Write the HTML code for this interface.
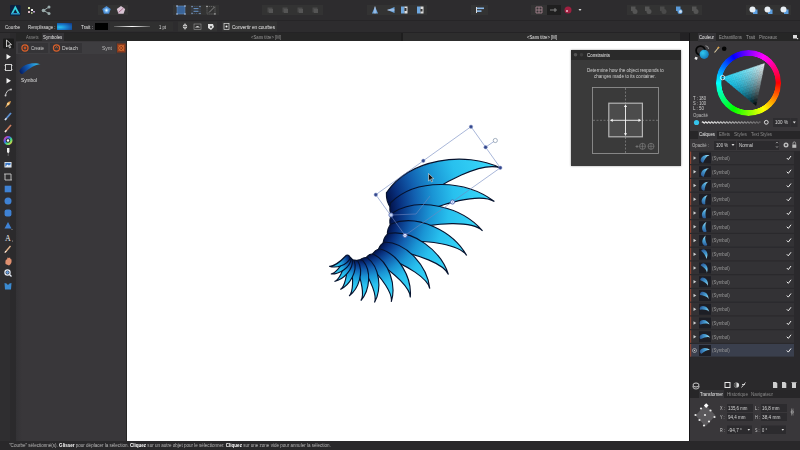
<!DOCTYPE html><html><head><meta charset="utf-8"><style>
*{margin:0;padding:0;box-sizing:border-box}
html,body{width:800px;height:450px;overflow:hidden;background:#2b2b2b;font-family:"Liberation Sans",sans-serif;color:#d8d8d8}
.a{position:absolute}
.t{position:absolute;white-space:nowrap;line-height:1;font-size:5px}
svg{position:absolute;overflow:visible}
</style></head><body>
<div class="a" style="left:0px;top:0px;width:800px;height:20px;background:#2d2c2e;"></div>
<div class="a" style="left:0px;top:19.5px;width:800px;height:1px;background:#262527;"></div>
<div class="a" style="left:0px;top:20.5px;width:800px;height:12.5px;background:#2d2c2e;"></div>
<div class="a" style="left:0px;top:32px;width:800px;height:1px;background:#242325;"></div>
<div class="a" style="left:0px;top:33px;width:800px;height:8px;background:#262527;"></div>
<div class="a" style="left:0px;top:33px;width:10px;height:408px;background:#2f2e30;"></div>
<div class="a" style="left:10px;top:33px;width:6px;height:408px;background:#2b2a2c;"></div>
<div class="a" style="left:16px;top:41px;width:111px;height:400px;background:#39373a;"></div>
<div class="a" style="left:16px;top:41px;width:6px;height:400px;background:linear-gradient(90deg,#333235,#39373a)"></div>
<div class="a" style="left:16px;top:33px;width:111px;height:8px;background:#262527;"></div>
<div class="a" style="left:127px;top:41px;width:562px;height:400px;background:#ffffff;"></div>
<div class="a" style="left:689px;top:41px;width:111px;height:400px;background:#39373a;"></div>
<div class="a" style="left:689px;top:33px;width:111px;height:8px;background:#262626;"></div>
<div class="a" style="left:0px;top:441px;width:800px;height:9px;background:#29282a;"></div>
<svg style="left:0px;top:0px" width="800" height="20" viewBox="0 0 800 20"><rect x="98" y="5" width="30" height="10" fill="#333333"/><rect x="173" y="5" width="46" height="10" fill="#333333"/><rect x="262" y="5" width="61" height="10" fill="#333333"/><rect x="367" y="5" width="60" height="10" fill="#333333"/><rect x="471" y="5" width="17" height="10" fill="#333333"/><rect x="531" y="5" width="16" height="10" fill="#333333"/><rect x="627" y="5" width="75" height="10" fill="#333333"/><rect x="746" y="5" width="45" height="10" fill="#333333"/><rect x="547" y="5" width="14" height="10" fill="#1f1f1f"/><rect x="10" y="5" width="10.5" height="10.8" rx="1.2" fill="#0e1f3e"/><path d="M15.3 5.6 L20 14.3 L10.8 14.3 Z" fill="#36d6e0"/><path d="M15.3 9.2 L17.3 12.9 L13.3 12.9 Z" fill="#0e1f3e"/><path d="M10.8 14.3 L20 14.3 L19.3 13 L11.5 13 Z" fill="#2a90c8"/><rect x="28" y="7" width="2" height="2" fill="#cfd9a0"/><rect x="31" y="9" width="2" height="2" fill="#eee"/><rect x="28" y="11" width="2" height="2" fill="#d9b8c0"/><rect x="33" y="11" width="2" height="1.5" fill="#b9a0d0"/><rect x="31" y="12" width="1.5" height="2" fill="#a0b080"/><circle cx="43.5" cy="10.5" r="1.8" fill="#9aa"/><circle cx="49" cy="7" r="1.5" fill="#9aa"/><circle cx="49" cy="13.5" r="1.5" fill="#9aa"/><path d="M43.5 10.5 L49 7 M43.5 10.5 L49 13.5" stroke="#9aa" stroke-width="1"/><polygon points="106.50,5.90 110.68,8.94 109.09,13.86 103.91,13.86 102.32,8.94" fill="#4a8ad0"/><polygon points="106.50,7.70 108.97,9.50 108.03,12.40 104.97,12.40 104.03,9.50" fill="#7ab8f0"/><circle cx="106.5" cy="10.3" r="1.1" fill="#e8f8ff"/><polygon points="121.00,5.90 125.18,8.94 123.59,13.86 118.41,13.86 116.82,8.94" fill="#d8c4d4"/><path d="M118.5 12.5 L123.5 8" stroke="#a06080" stroke-width="0.9"/><rect x="177" y="6" width="8" height="8" fill="#3a6498" stroke="#6a90c0" stroke-width="0.5"/><rect x="176.3" y="5.3" width="1.4" height="1.4" fill="#a8c0e0"/><rect x="176.3" y="13.3" width="1.4" height="1.4" fill="#a8c0e0"/><rect x="184.3" y="5.3" width="1.4" height="1.4" fill="#a8c0e0"/><rect x="184.3" y="13.3" width="1.4" height="1.4" fill="#a8c0e0"/><rect x="192" y="6.5" width="8" height="7" fill="none" stroke="#4a6a98" stroke-width="0.6" stroke-dasharray="1 0.8"/><rect x="193.5" y="8" width="5" height="1.2" fill="#6088b8"/><rect x="193.5" y="10.7" width="5" height="1.2" fill="#6088b8"/><rect x="191.4" y="5.9" width="1.2" height="1.2" fill="#8aa4c8"/><rect x="191.4" y="12.9" width="1.2" height="1.2" fill="#8aa4c8"/><rect x="199.4" y="5.9" width="1.2" height="1.2" fill="#8aa4c8"/><rect x="199.4" y="12.9" width="1.2" height="1.2" fill="#8aa4c8"/><path d="M207 6.5 h8 v7.5 h-8 z" fill="none" stroke="#808080" stroke-width="0.6" stroke-dasharray="1.2 0.8"/><path d="M209 12.5 L214.5 7" stroke="#a8a8a8" stroke-width="0.7"/><rect x="206.3" y="5.8" width="1.3" height="1.3" fill="#bbb"/><rect x="214.3" y="13.3" width="1.3" height="1.3" fill="#bbb"/><rect x="267.5" y="7.5" width="5" height="5" fill="#4a4a4a"/><rect x="269" y="9" width="4" height="4" fill="#555"/><rect x="282.5" y="7.5" width="5" height="5" fill="#4a4a4a"/><rect x="284" y="9" width="4" height="4" fill="#555"/><rect x="297.5" y="7.5" width="5" height="5" fill="#4a4a4a"/><rect x="299" y="9" width="4" height="4" fill="#555"/><rect x="312.5" y="7.5" width="5" height="5" fill="#4a4a4a"/><rect x="314" y="9" width="4" height="4" fill="#555"/><path d="M372 13.5 L375 6.5 L378 13.5 Z" fill="#6fa8e0"/><path d="M375 6.5 L375 13.5" stroke="#dde" stroke-width="0.7"/><path d="M387.5 10 L394.5 7 L394.5 13 Z" fill="#6fa8e0"/><path d="M387.5 10 L394.5 10" stroke="#dde" stroke-width="0.7"/><rect x="401" y="6.5" width="3.5" height="7" fill="#6fa8e0"/><rect x="404.5" y="6.5" width="3" height="7" fill="#ddd"/><rect x="404.5" y="8" width="2" height="3" fill="#333"/><rect x="417" y="6.5" width="3.5" height="7" fill="#6fa8e0"/><rect x="420.5" y="6.5" width="3" height="7" fill="#ddd"/><rect x="420.5" y="9" width="2" height="2.5" fill="#333"/><rect x="477" y="7.5" width="7" height="1.6" fill="#8ab8e8"/><rect x="477" y="10.3" width="4.5" height="1.6" fill="#8ab8e8"/><rect x="476" y="7" width="1" height="6" fill="#ddd"/><path d="M536 7 h6 v6 h-6 z M539 7 v6 M536 10 h6" fill="none" stroke="#b08a98" stroke-width="0.8"/><path d="M550 10 h7 M555 8 v4" stroke="#aaa" stroke-width="0.7"/><circle cx="568" cy="10" r="3.5" fill="#a02040"/><circle cx="567" cy="11" r="1" fill="#f0c0d0"/><path d="M578.5 9 L581.5 9 L580 11 Z" fill="#ddd"/><rect x="631" y="6.5" width="4.5" height="4.5" fill="#555"/><circle cx="635" cy="11.5" r="2.5" fill="#555"/><rect x="645" y="6.5" width="4.5" height="4.5" fill="#555"/><circle cx="649" cy="11.5" r="2.5" fill="#555"/><rect x="660" y="6.5" width="4.5" height="4.5" fill="#4a4a4a"/><circle cx="664" cy="11.5" r="2.5" fill="#4a4a4a"/><rect x="676" y="6.5" width="4.5" height="4.5" fill="#5a9ad8"/><circle cx="680" cy="11.5" r="2.5" fill="#5a9ad8"/><rect x="692" y="6.5" width="4.5" height="4.5" fill="#555"/><circle cx="696" cy="11.5" r="2.5" fill="#555"/><circle cx="680.5" cy="11.5" r="1.5" fill="#cde"/><rect x="753" y="9.5" width="4.5" height="4.5" fill="#5b9ee0"/><circle cx="752.5" cy="9.5" r="3" fill="#e8eef4"/><rect x="768" y="9.5" width="4.5" height="4.5" fill="#5b9ee0"/><circle cx="767.5" cy="9.5" r="3" fill="#e8eef4"/><rect x="784" y="9.5" width="4.5" height="4.5" fill="#5b9ee0"/><circle cx="783.5" cy="9.5" r="3" fill="#e8eef4"/></svg>
<div class="t" style="left:5px;top:24.65px;font-size:5.6px;height:5.6px;color:#e0e0e0;transform:scaleX(0.817);transform-origin:0 0;">Courbe</div>
<div class="t" style="left:27.5px;top:24.65px;font-size:5.6px;height:5.6px;color:#e0e0e0;transform:scaleX(0.775);transform-origin:0 0;">Remplissage :</div>
<div class="a" style="left:57px;top:22.5px;width:14.5px;height:7.5px;background:radial-gradient(ellipse at 20% 60%,#28c0ee 0%,#1a78c8 45%,#10307a 100%)"></div>
<div class="t" style="left:81px;top:24.65px;font-size:5.6px;height:5.6px;color:#e0e0e0;transform:scaleX(0.851);transform-origin:0 0;">Trait :</div>
<div class="a" style="left:95px;top:23px;width:13px;height:7px;background:#000;"></div>
<div class="a" style="left:110px;top:22px;width:63px;height:9px;background:#303030;"></div>
<div class="a" style="left:114px;top:26px;width:36px;height:1.2px;background:linear-gradient(90deg,rgba(255,255,255,0.2),#fff 50%,rgba(255,255,255,0.2))"></div>
<div class="t" style="left:159px;top:24.65px;font-size:5.4px;height:5.4px;color:#ddd;transform:scaleX(0.777);transform-origin:0 0;">1 pt</div>
<svg style="left:0px;top:20px" width="800" height="13" viewBox="0 20 800 13"><rect x="178" y="21.5" width="13" height="10" fill="#333"/><rect x="191" y="21.5" width="13" height="10" fill="#333"/><rect x="204" y="21.5" width="13" height="10" fill="#333"/><path d="M185 23 L187.5 26.5 L185 30 L182.5 26.5 Z" fill="#eee"/><path d="M181.5 26.5 h7 M185 23 v7" stroke="#2d2d2d" stroke-width="0.6"/><rect x="194" y="24" width="7" height="5.5" fill="none" stroke="#999" stroke-width="0.6"/><path d="M195 27.5 Q197.5 24.5 200 27.5 Z" fill="#ddd"/><path d="M208 24 L213 24 L214 27 L211 30 L208 28 Z" fill="#ddd"/><circle cx="211" cy="27" r="1" fill="#444"/><rect x="222" y="21.5" width="55" height="10" fill="#333"/><rect x="224" y="23.5" width="5" height="6" fill="none" stroke="#ddd" stroke-width="0.7"/><circle cx="226.5" cy="26.5" r="1" fill="#fff"/></svg>
<div class="t" style="left:232px;top:24.65px;font-size:5.6px;height:5.6px;color:#e8e8e8;transform:scaleX(0.827);transform-origin:0 0;">Convertir en courbes</div>
<div class="a" style="left:127px;top:33px;width:274px;height:8px;background:#262626;"></div>
<div class="a" style="left:401px;top:33px;width:2px;height:8px;background:#1e1e1e;"></div>
<div class="a" style="left:403px;top:33px;width:286px;height:8px;background:#2d2d2d;"></div>
<div class="a" style="left:680px;top:33px;width:9px;height:8px;background:#232224;"></div>
<div class="t" style="left:251px;top:35.15px;font-size:5.0px;height:5.0px;color:#9a9a9a;transform:scaleX(0.850);transform-origin:0 0;">&lt;Sans titre&gt; [M]</div>
<div class="t" style="left:527px;top:35.15px;font-size:5.0px;height:5.0px;color:#e8e8e8;transform:scaleX(0.850);transform-origin:0 0;">&lt;Sans titre&gt; [M]</div>
<svg style="left:0px;top:33px" width="16" height="408" viewBox="0 33 16 408"><defs><linearGradient id="rb" x1="0" y1="0" x2="1" y2="1"><stop offset="0" stop-color="#f040a0"/><stop offset="0.35" stop-color="#4060f0"/><stop offset="0.65" stop-color="#40e080"/><stop offset="1" stop-color="#f0d040"/></linearGradient></defs><rect x="3" y="38.5" width="11" height="10" rx="1" fill="#1c1c1c"/><path d="M6.5 40 L6.5 47 L8.2 45.3 L9.6 48 L10.6 47.5 L9.3 44.8 L11.5 44.6 Z" fill="none" stroke="#eee" stroke-width="0.8"/><path d="M6.5 54 L6.5 59.5 L11 56.7 Z" fill="#f0f0f0"/><rect x="5.5" y="64.5" width="6" height="6" fill="none" stroke="#ddd" stroke-width="0.9"/><path d="M4.5 65.5 h1 M11.5 65.5 h1 M4.5 69.5h1 M11.5 69.5 h1" stroke="#ddd" stroke-width="0.7"/><path d="M6.5 78 L6.5 83.5 L11 80.7 Z" fill="#f0f0f0"/><path d="M5.5 96 Q6 90 11 89.5" fill="none" stroke="#ddd" stroke-width="0.9"/><circle cx="11" cy="89.5" r="0.9" fill="#ccc"/><circle cx="5.5" cy="95.5" r="0.9" fill="#ccc"/><path d="M5 108 L8 102 L11 101 L10 104 Z" fill="#e0a050"/><circle cx="8" cy="104" r="1.2" fill="#f5d090"/><path d="M5 120 L11 113" stroke="#5b8fd0" stroke-width="1.8"/><path d="M5 120 L6.5 118.3" stroke="#ddd" stroke-width="1.4"/><path d="M5 132 L11 125" stroke="#d08060" stroke-width="1.6"/><path d="M5 132 L6.5 130.3" stroke="#eee" stroke-width="1.3"/><circle cx="8" cy="140.5" r="3.4" fill="none" stroke="url(#rb)" stroke-width="2.2"/><circle cx="8" cy="140.5" r="1.2" fill="#fff"/><path d="M7 148 h2.4 v4 l-1.2 1.5 l-1.2 -1.5 z" fill="#eee"/><path d="M8.2 153.5 v2.5" stroke="#999" stroke-width="0.6"/><rect x="4.5" y="162" width="7" height="5.5" fill="#eee"/><rect x="5.3" y="162.8" width="5.4" height="3.9" fill="#3a78c8"/><path d="M5.3 166.7 L7.5 164.5 L9 165.8 L10.7 164.2 V166.7 Z" fill="#fff"/><path d="M5 174 h6 v6 h-6 z" fill="none" stroke="#ccc" stroke-width="0.9"/><path d="M4 174 h1 M11 180 h1" stroke="#ccc" stroke-width="0.8"/><rect x="4.7" y="185.7" width="6.6" height="6.6" fill="#3f82d4"/><circle cx="8" cy="201" r="3.5" fill="#3f82d4"/><rect x="4.6" y="209.6" width="6.8" height="6.8" rx="2" fill="#3f82d4"/><path d="M8 222 L11.5 228.5 L4.5 228.5 Z" fill="#3f82d4"/><circle cx="12" cy="229.5" r="0.5" fill="#aaa"/><text x="8" y="241" font-family="Liberation Serif" font-size="8" fill="#e8e8e8" text-anchor="middle">A</text><circle cx="12.5" cy="241" r="0.5" fill="#aaa"/><path d="M5 252.5 L10.5 246" stroke="#e8b890" stroke-width="1.3"/><path d="M5 252.5 L6.2 251" stroke="#fff" stroke-width="1"/><path d="M5.5 264 Q5 259 7 259.5 L7.5 257.5 L9 258 L10 257.5 L10.5 259 L11.5 259.5 Q12 264 9 265.5 Z" fill="#e09070"/><circle cx="7.5" cy="272.5" r="2.6" fill="none" stroke="#e8eef8" stroke-width="1.2"/><path d="M9.5 274.5 L11.5 276.5" stroke="#e8eef8" stroke-width="1.2"/><circle cx="7.5" cy="272.5" r="1.4" fill="#6aa0e0"/><path d="M4.5 283 L6.5 283.5 L8 285 L9.5 283.5 L11.5 283 L11 289.5 L5 289.5 Z" fill="#3b8ad0"/></svg>
<div class="a" style="left:16px;top:33px;width:111px;height:8px;background:#262626;"></div>
<div class="a" style="left:42px;top:33px;width:21.5px;height:8px;background:#333235;"></div>
<div class="t" style="left:26px;top:35.15px;font-size:5.0px;height:5.0px;color:#8a8a8a;transform:scaleX(0.846);transform-origin:0 0;">Assets</div>
<div class="t" style="left:43px;top:35.15px;font-size:5.0px;height:5.0px;color:#e6e6e6;transform:scaleX(0.879);transform-origin:0 0;">Symboles</div>
<div class="a" style="left:16px;top:41.5px;width:100px;height:12px;background:#3e3d40;"></div>
<div class="a" style="left:17.5px;top:42.5px;width:30.5px;height:10.5px;background:#353437;"></div>
<div class="a" style="left:50px;top:42.5px;width:32px;height:10.5px;background:#353437;"></div>
<svg style="left:16px;top:33px" width="111" height="408" viewBox="16 33 111 408"><circle cx="25" cy="48" r="3.1" fill="none" stroke="#d9602a" stroke-width="1.2"/><circle cx="25" cy="48" r="1.4" fill="#c85020"/><circle cx="56.5" cy="48" r="3.1" fill="none" stroke="#d9602a" stroke-width="1.2"/><path d="M55 48.5 L56.5 46.5 L58 48.5" fill="none" stroke="#d9602a" stroke-width="0.8"/><rect x="117" y="43.5" width="8.5" height="9" fill="#8a3a1c"/><path d="M118.5 45 L124 51 M124 45 L118.5 51" stroke="#d86a30" stroke-width="0.8"/><circle cx="121.25" cy="48" r="2.6" fill="none" stroke="#e07838" stroke-width="0.8"/><defs><linearGradient id="sg" x1="0" y1="0.5" x2="1" y2="0.5"><stop offset="0" stop-color="#061c60"/><stop offset="0.45" stop-color="#1460b8"/><stop offset="1" stop-color="#3ad4f8"/></linearGradient></defs><path transform="translate(21 72.5) rotate(-22) scale(21.5)" d="M-0.032,-0.116 C0.258,-0.339 0.75,-0.247 1,0 C0.88,-0.1 0.5,-0.07 0.06,0.09 C-0.04,0.09 -0.07,-0.02 -0.032,-0.116 Z" fill="url(#sg)"/></svg>
<div class="t" style="left:31px;top:45.65px;font-size:5.8px;height:5.8px;color:#d0d0d0;transform:scaleX(0.747);transform-origin:0 0;">Create</div>
<div class="t" style="left:62px;top:45.65px;font-size:5.8px;height:5.8px;color:#d0d0d0;transform:scaleX(0.871);transform-origin:0 0;">Detach</div>
<div class="t" style="left:102px;top:45.65px;font-size:5.4px;height:5.4px;color:#bdbdbd;transform:scaleX(0.925);transform-origin:0 0;">Synt</div>
<div class="t" style="left:21px;top:77.65px;font-size:5.6px;height:5.6px;color:#e0e0e0;transform:scaleX(0.857);transform-origin:0 0;">Symbol</div>
<div class="a" style="left:126px;top:41px;width:1px;height:400px;background:#262626;"></div>
<div class="a" style="left:689px;top:33px;width:111px;height:8px;background:#262626;"></div>
<div class="a" style="left:698px;top:33px;width:18px;height:8.5px;background:#343336;"></div>
<div class="t" style="left:699px;top:35.15px;font-size:5.0px;height:5.0px;color:#ececec;transform:scaleX(0.857);transform-origin:0 0;">Couleur</div>
<div class="t" style="left:719px;top:35.15px;font-size:5.0px;height:5.0px;color:#9a9a9a;transform:scaleX(0.853);transform-origin:0 0;">Echantillons</div>
<div class="t" style="left:746px;top:35.15px;font-size:5.0px;height:5.0px;color:#9a9a9a;transform:scaleX(0.917);transform-origin:0 0;">Trait</div>
<div class="t" style="left:759px;top:35.15px;font-size:5.0px;height:5.0px;color:#9a9a9a;transform:scaleX(0.875);transform-origin:0 0;">Pinceaux</div>
<svg style="left:689px;top:33px" width="111" height="408" viewBox="689 33 111 408"><rect x="793" y="35" width="4" height="3.5" fill="#ddd"/><rect x="797" y="38" width="1.2" height="1.2" fill="#ddd"/><circle cx="700.5" cy="50.5" r="4.4" fill="none" stroke="#050505" stroke-width="1.8"/><defs><radialGradient id="bc" cx="0.35" cy="0.35" r="0.7"><stop offset="0" stop-color="#30c8f0"/><stop offset="1" stop-color="#1478b8"/></radialGradient><radialGradient id="tri_b" cx="0" cy="1" r="1"><stop offset="0" stop-color="#000"/><stop offset="1" stop-color="#000" stop-opacity="0"/></radialGradient></defs><circle cx="704.2" cy="54.3" r="4.6" fill="url(#bc)"/><rect x="694.8" y="57" width="2.6" height="2.6" fill="#eee" transform="rotate(20 696 58.3)"/><path d="M705.5 45.8 Q708.5 46 708.6 49" fill="none" stroke="#aaa" stroke-width="0.8"/><path d="M714.5 52.5 L719 47" stroke="#d9c9a0" stroke-width="1.1"/><path d="M717.8 48.2 L719 47" stroke="#e0a040" stroke-width="1.6"/><circle cx="724.2" cy="48.8" r="2.3" fill="#050505"/><foreignObject x="715.5" y="50" width="65.5" height="65.5"><div style="width:65.5px;height:65.5px;border-radius:50%;background:conic-gradient(from 90deg,#f00,#ff0,#0f0,#0ff,#00f,#f0f,#f00);-webkit-mask:radial-gradient(circle,transparent 26.8px,#000 27.4px);mask:radial-gradient(circle,transparent 26.8px,#000 27.4px)"></div></foreignObject><polygon points="722.40,77.60 725.90,76.43 725.20,79.93" fill="#22cff0" stroke="#22cff0" stroke-width="0.5"/><polygon points="725.90,76.43 728.70,78.77 725.20,79.93" fill="#24cfef" stroke="#24cfef" stroke-width="0.35"/><polygon points="725.20,79.93 728.70,78.77 728.00,82.27" fill="#1fcbed" stroke="#1fcbed" stroke-width="0.5"/><polygon points="728.70,78.77 731.50,81.10 728.00,82.27" fill="#22c9eb" stroke="#22c9eb" stroke-width="0.35"/><polygon points="728.00,82.27 731.50,81.10 730.80,84.60" fill="#1dc4e7" stroke="#1dc4e7" stroke-width="0.5"/><polygon points="731.50,81.10 734.30,83.43 730.80,84.60" fill="#20c1e3" stroke="#20c1e3" stroke-width="0.35"/><polygon points="730.80,84.60 734.30,83.43 733.60,86.93" fill="#1bbadd" stroke="#1bbadd" stroke-width="0.5"/><polygon points="734.30,83.43 737.10,85.77 733.60,86.93" fill="#1eb7d8" stroke="#1eb7d8" stroke-width="0.35"/><polygon points="733.60,86.93 737.10,85.77 736.40,89.27" fill="#18aed0" stroke="#18aed0" stroke-width="0.5"/><polygon points="737.10,85.77 739.90,88.10 736.40,89.27" fill="#1ca9ca" stroke="#1ca9ca" stroke-width="0.35"/><polygon points="736.40,89.27 739.90,88.10 739.20,91.60" fill="#16a0c0" stroke="#16a0c0" stroke-width="0.5"/><polygon points="739.90,88.10 742.70,90.43 739.20,91.60" fill="#1a9ab8" stroke="#1a9ab8" stroke-width="0.35"/><polygon points="739.20,91.60 742.70,90.43 742.00,93.93" fill="#148fac" stroke="#148fac" stroke-width="0.5"/><polygon points="742.70,90.43 745.50,92.77 742.00,93.93" fill="#1887a2" stroke="#1887a2" stroke-width="0.35"/><polygon points="742.00,93.93 745.50,92.77 744.80,96.27" fill="#117b95" stroke="#117b95" stroke-width="0.5"/><polygon points="745.50,92.77 748.30,95.10 744.80,96.27" fill="#167389" stroke="#167389" stroke-width="0.35"/><polygon points="744.80,96.27 748.30,95.10 747.60,98.60" fill="#0f657a" stroke="#0f657a" stroke-width="0.5"/><polygon points="748.30,95.10 751.10,97.43 747.60,98.60" fill="#145b6d" stroke="#145b6d" stroke-width="0.35"/><polygon points="747.60,98.60 751.10,97.43 750.40,100.93" fill="#0d4c5c" stroke="#0d4c5c" stroke-width="0.5"/><polygon points="751.10,97.43 753.90,99.77 750.40,100.93" fill="#12414d" stroke="#12414d" stroke-width="0.35"/><polygon points="750.40,100.93 753.90,99.77 753.20,103.27" fill="#0a303a" stroke="#0a303a" stroke-width="0.5"/><polygon points="753.90,99.77 756.70,102.10 753.20,103.27" fill="#10252a" stroke="#10252a" stroke-width="0.35"/><polygon points="753.20,103.27 756.70,102.10 756.00,105.60" fill="#081215" stroke="#081215" stroke-width="0.5"/><polygon points="725.90,76.43 729.40,75.27 728.70,78.77" fill="#2cd1f0" stroke="#2cd1f0" stroke-width="0.5"/><polygon points="729.40,75.27 732.20,77.60 728.70,78.77" fill="#30d0ef" stroke="#30d0ef" stroke-width="0.35"/><polygon points="728.70,78.77 732.20,77.60 731.50,81.10" fill="#2bccec" stroke="#2bccec" stroke-width="0.5"/><polygon points="732.20,77.60 735.00,79.93 731.50,81.10" fill="#2fcae9" stroke="#2fcae9" stroke-width="0.35"/><polygon points="731.50,81.10 735.00,79.93 734.30,83.43" fill="#29c4e5" stroke="#29c4e5" stroke-width="0.5"/><polygon points="735.00,79.93 737.80,82.27 734.30,83.43" fill="#2dc1e1" stroke="#2dc1e1" stroke-width="0.35"/><polygon points="734.30,83.43 737.80,82.27 737.10,85.77" fill="#28bada" stroke="#28bada" stroke-width="0.5"/><polygon points="737.80,82.27 740.60,84.60 737.10,85.77" fill="#2cb6d4" stroke="#2cb6d4" stroke-width="0.35"/><polygon points="737.10,85.77 740.60,84.60 739.90,88.10" fill="#27adcc" stroke="#27adcc" stroke-width="0.5"/><polygon points="740.60,84.60 743.40,86.93 739.90,88.10" fill="#2ba8c4" stroke="#2ba8c4" stroke-width="0.35"/><polygon points="739.90,88.10 743.40,86.93 742.70,90.43" fill="#259eba" stroke="#259eba" stroke-width="0.5"/><polygon points="743.40,86.93 746.20,89.27 742.70,90.43" fill="#2a97b1" stroke="#2a97b1" stroke-width="0.35"/><polygon points="742.70,90.43 746.20,89.27 745.50,92.77" fill="#248ca5" stroke="#248ca5" stroke-width="0.5"/><polygon points="746.20,89.27 749.00,91.60 745.50,92.77" fill="#29849a" stroke="#29849a" stroke-width="0.35"/><polygon points="745.50,92.77 749.00,91.60 748.30,95.10" fill="#22778c" stroke="#22778c" stroke-width="0.5"/><polygon points="749.00,91.60 751.80,93.93 748.30,95.10" fill="#286f80" stroke="#286f80" stroke-width="0.35"/><polygon points="748.30,95.10 751.80,93.93 751.10,97.43" fill="#216070" stroke="#216070" stroke-width="0.5"/><polygon points="751.80,93.93 754.60,96.27 751.10,97.43" fill="#275763" stroke="#275763" stroke-width="0.35"/><polygon points="751.10,97.43 754.60,96.27 753.90,99.77" fill="#204751" stroke="#204751" stroke-width="0.5"/><polygon points="754.60,96.27 757.40,98.60 753.90,99.77" fill="#263c42" stroke="#263c42" stroke-width="0.35"/><polygon points="753.90,99.77 757.40,98.60 756.70,102.10" fill="#1e2b2e" stroke="#1e2b2e" stroke-width="0.5"/><polygon points="729.40,75.27 732.90,74.10 732.20,77.60" fill="#38d3f0" stroke="#38d3f0" stroke-width="0.5"/><polygon points="732.90,74.10 735.70,76.43 732.20,77.60" fill="#3cd2ef" stroke="#3cd2ef" stroke-width="0.35"/><polygon points="732.20,77.60 735.70,76.43 735.00,79.93" fill="#38cdeb" stroke="#38cdeb" stroke-width="0.5"/><polygon points="735.70,76.43 738.50,78.77 735.00,79.93" fill="#3ccbe8" stroke="#3ccbe8" stroke-width="0.35"/><polygon points="735.00,79.93 738.50,78.77 737.80,82.27" fill="#37c5e2" stroke="#37c5e2" stroke-width="0.5"/><polygon points="738.50,78.77 741.30,81.10 737.80,82.27" fill="#3cc2de" stroke="#3cc2de" stroke-width="0.35"/><polygon points="737.80,82.27 741.30,81.10 740.60,84.60" fill="#37bad6" stroke="#37bad6" stroke-width="0.5"/><polygon points="741.30,81.10 744.10,83.43 740.60,84.60" fill="#3cb5d0" stroke="#3cb5d0" stroke-width="0.35"/><polygon points="740.60,84.60 744.10,83.43 743.40,86.93" fill="#36acc7" stroke="#36acc7" stroke-width="0.5"/><polygon points="744.10,83.43 746.90,85.77 743.40,86.93" fill="#3ca7bf" stroke="#3ca7bf" stroke-width="0.35"/><polygon points="743.40,86.93 746.90,85.77 746.20,89.27" fill="#369cb4" stroke="#369cb4" stroke-width="0.5"/><polygon points="746.90,85.77 749.70,88.10 746.20,89.27" fill="#3b95aa" stroke="#3b95aa" stroke-width="0.35"/><polygon points="746.20,89.27 749.70,88.10 749.00,91.60" fill="#35899d" stroke="#35899d" stroke-width="0.5"/><polygon points="749.70,88.10 752.50,90.43 749.00,91.60" fill="#3b8292" stroke="#3b8292" stroke-width="0.35"/><polygon points="749.00,91.60 752.50,90.43 751.80,93.93" fill="#357483" stroke="#357483" stroke-width="0.5"/><polygon points="752.50,90.43 755.30,92.77 751.80,93.93" fill="#3b6b77" stroke="#3b6b77" stroke-width="0.35"/><polygon points="751.80,93.93 755.30,92.77 754.60,96.27" fill="#345c66" stroke="#345c66" stroke-width="0.5"/><polygon points="755.30,92.77 758.10,95.10 754.60,96.27" fill="#3b5258" stroke="#3b5258" stroke-width="0.35"/><polygon points="754.60,96.27 758.10,95.10 757.40,98.60" fill="#344245" stroke="#344245" stroke-width="0.5"/><polygon points="732.90,74.10 736.40,72.93 735.70,76.43" fill="#45d5f0" stroke="#45d5f0" stroke-width="0.5"/><polygon points="736.40,72.93 739.20,75.27 735.70,76.43" fill="#4ad4ee" stroke="#4ad4ee" stroke-width="0.35"/><polygon points="735.70,76.43 739.20,75.27 738.50,78.77" fill="#46cfe9" stroke="#46cfe9" stroke-width="0.5"/><polygon points="739.20,75.27 742.00,77.60 738.50,78.77" fill="#4bcce6" stroke="#4bcce6" stroke-width="0.35"/><polygon points="738.50,78.77 742.00,77.60 741.30,81.10" fill="#46c5e0" stroke="#46c5e0" stroke-width="0.5"/><polygon points="742.00,77.60 744.80,79.93 741.30,81.10" fill="#4cc2da" stroke="#4cc2da" stroke-width="0.35"/><polygon points="741.30,81.10 744.80,79.93 744.10,83.43" fill="#47bad2" stroke="#47bad2" stroke-width="0.5"/><polygon points="744.80,79.93 747.60,82.27 744.10,83.43" fill="#4cb5cc" stroke="#4cb5cc" stroke-width="0.35"/><polygon points="744.10,83.43 747.60,82.27 746.90,85.77" fill="#47abc1" stroke="#47abc1" stroke-width="0.5"/><polygon points="747.60,82.27 750.40,84.60 746.90,85.77" fill="#4da5b9" stroke="#4da5b9" stroke-width="0.35"/><polygon points="746.90,85.77 750.40,84.60 749.70,88.10" fill="#479aad" stroke="#479aad" stroke-width="0.5"/><polygon points="750.40,84.60 753.20,86.93 749.70,88.10" fill="#4e93a3" stroke="#4e93a3" stroke-width="0.35"/><polygon points="749.70,88.10 753.20,86.93 752.50,90.43" fill="#488796" stroke="#488796" stroke-width="0.5"/><polygon points="753.20,86.93 756.00,89.27 752.50,90.43" fill="#4f7f8a" stroke="#4f7f8a" stroke-width="0.35"/><polygon points="752.50,90.43 756.00,89.27 755.30,92.77" fill="#48717a" stroke="#48717a" stroke-width="0.5"/><polygon points="756.00,89.27 758.80,91.60 755.30,92.77" fill="#50686d" stroke="#50686d" stroke-width="0.35"/><polygon points="755.30,92.77 758.80,91.60 758.10,95.10" fill="#49585c" stroke="#49585c" stroke-width="0.5"/><polygon points="736.40,72.93 739.90,71.77 739.20,75.27" fill="#53d7f0" stroke="#53d7f0" stroke-width="0.5"/><polygon points="739.90,71.77 742.70,74.10 739.20,75.27" fill="#59d6ed" stroke="#59d6ed" stroke-width="0.35"/><polygon points="739.20,75.27 742.70,74.10 742.00,77.60" fill="#55d0e8" stroke="#55d0e8" stroke-width="0.5"/><polygon points="742.70,74.10 745.50,76.43 742.00,77.60" fill="#5bcde4" stroke="#5bcde4" stroke-width="0.35"/><polygon points="742.00,77.60 745.50,76.43 744.80,79.93" fill="#56c6dd" stroke="#56c6dd" stroke-width="0.5"/><polygon points="745.50,76.43 748.30,78.77 744.80,79.93" fill="#5dc2d7" stroke="#5dc2d7" stroke-width="0.35"/><polygon points="744.80,79.93 748.30,78.77 747.60,82.27" fill="#58b9ce" stroke="#58b9ce" stroke-width="0.5"/><polygon points="748.30,78.77 751.10,81.10 747.60,82.27" fill="#5eb4c7" stroke="#5eb4c7" stroke-width="0.35"/><polygon points="747.60,82.27 751.10,81.10 750.40,84.60" fill="#59aabc" stroke="#59aabc" stroke-width="0.5"/><polygon points="751.10,81.10 753.90,83.43 750.40,84.60" fill="#60a4b3" stroke="#60a4b3" stroke-width="0.35"/><polygon points="750.40,84.60 753.90,83.43 753.20,86.93" fill="#5b98a7" stroke="#5b98a7" stroke-width="0.5"/><polygon points="753.90,83.43 756.70,85.77 753.20,86.93" fill="#62919c" stroke="#62919c" stroke-width="0.35"/><polygon points="753.20,86.93 756.70,85.77 756.00,89.27" fill="#5c848e" stroke="#5c848e" stroke-width="0.5"/><polygon points="756.70,85.77 759.50,88.10 756.00,89.27" fill="#647c82" stroke="#647c82" stroke-width="0.35"/><polygon points="756.00,89.27 759.50,88.10 758.80,91.60" fill="#5d6d71" stroke="#5d6d71" stroke-width="0.5"/><polygon points="739.90,71.77 743.40,70.60 742.70,74.10" fill="#63daef" stroke="#63daef" stroke-width="0.5"/><polygon points="743.40,70.60 746.20,72.93 742.70,74.10" fill="#6ad8ec" stroke="#6ad8ec" stroke-width="0.35"/><polygon points="742.70,74.10 746.20,72.93 745.50,76.43" fill="#66d1e6" stroke="#66d1e6" stroke-width="0.5"/><polygon points="746.20,72.93 749.00,75.27 745.50,76.43" fill="#6ccee2" stroke="#6ccee2" stroke-width="0.35"/><polygon points="745.50,76.43 749.00,75.27 748.30,78.77" fill="#68c7da" stroke="#68c7da" stroke-width="0.5"/><polygon points="749.00,75.27 751.80,77.60 748.30,78.77" fill="#6fc2d4" stroke="#6fc2d4" stroke-width="0.35"/><polygon points="748.30,78.77 751.80,77.60 751.10,81.10" fill="#6ab9ca" stroke="#6ab9ca" stroke-width="0.5"/><polygon points="751.80,77.60 754.60,79.93 751.10,81.10" fill="#72b4c2" stroke="#72b4c2" stroke-width="0.35"/><polygon points="751.10,81.10 754.60,79.93 753.90,83.43" fill="#6da9b7" stroke="#6da9b7" stroke-width="0.5"/><polygon points="754.60,79.93 757.40,82.27 753.90,83.43" fill="#74a3ad" stroke="#74a3ad" stroke-width="0.35"/><polygon points="753.90,83.43 757.40,82.27 756.70,85.77" fill="#6f97a0" stroke="#6f97a0" stroke-width="0.5"/><polygon points="757.40,82.27 760.20,84.60 756.70,85.77" fill="#778f95" stroke="#778f95" stroke-width="0.35"/><polygon points="756.70,85.77 760.20,84.60 759.50,88.10" fill="#718286" stroke="#718286" stroke-width="0.5"/><polygon points="743.40,70.60 746.90,69.43 746.20,72.93" fill="#74dcef" stroke="#74dcef" stroke-width="0.5"/><polygon points="746.90,69.43 749.70,71.77 746.20,72.93" fill="#7cdaeb" stroke="#7cdaeb" stroke-width="0.35"/><polygon points="746.20,72.93 749.70,71.77 749.00,75.27" fill="#78d3e4" stroke="#78d3e4" stroke-width="0.5"/><polygon points="749.70,71.77 752.50,74.10 749.00,75.27" fill="#7fd0df" stroke="#7fd0df" stroke-width="0.35"/><polygon points="749.00,75.27 752.50,74.10 751.80,77.60" fill="#7bc7d7" stroke="#7bc7d7" stroke-width="0.5"/><polygon points="752.50,74.10 755.30,76.43 751.80,77.60" fill="#83c3d0" stroke="#83c3d0" stroke-width="0.35"/><polygon points="751.80,77.60 755.30,76.43 754.60,79.93" fill="#7eb9c6" stroke="#7eb9c6" stroke-width="0.5"/><polygon points="755.30,76.43 758.10,78.77 754.60,79.93" fill="#86b4bd" stroke="#86b4bd" stroke-width="0.35"/><polygon points="754.60,79.93 758.10,78.77 757.40,82.27" fill="#82a8b1" stroke="#82a8b1" stroke-width="0.5"/><polygon points="758.10,78.77 760.90,81.10 757.40,82.27" fill="#8aa2a7" stroke="#8aa2a7" stroke-width="0.35"/><polygon points="757.40,82.27 760.90,81.10 760.20,84.60" fill="#859599" stroke="#859599" stroke-width="0.5"/><polygon points="746.90,69.43 750.40,68.27 749.70,71.77" fill="#87deee" stroke="#87deee" stroke-width="0.5"/><polygon points="750.40,68.27 753.20,70.60 749.70,71.77" fill="#8fdcea" stroke="#8fdcea" stroke-width="0.35"/><polygon points="749.70,71.77 753.20,70.60 752.50,74.10" fill="#8bd4e2" stroke="#8bd4e2" stroke-width="0.5"/><polygon points="753.20,70.60 756.00,72.93 752.50,74.10" fill="#93d1dd" stroke="#93d1dd" stroke-width="0.35"/><polygon points="752.50,74.10 756.00,72.93 755.30,76.43" fill="#8fc8d3" stroke="#8fc8d3" stroke-width="0.5"/><polygon points="756.00,72.93 758.80,75.27 755.30,76.43" fill="#98c3cc" stroke="#98c3cc" stroke-width="0.35"/><polygon points="755.30,76.43 758.80,75.27 758.10,78.77" fill="#94b9c1" stroke="#94b9c1" stroke-width="0.5"/><polygon points="758.80,75.27 761.60,77.60 758.10,78.77" fill="#9cb3b8" stroke="#9cb3b8" stroke-width="0.35"/><polygon points="758.10,78.77 761.60,77.60 760.90,81.10" fill="#98a8ab" stroke="#98a8ab" stroke-width="0.5"/><polygon points="750.40,68.27 753.90,67.10 753.20,70.60" fill="#9be1ed" stroke="#9be1ed" stroke-width="0.5"/><polygon points="753.90,67.10 756.70,69.43 753.20,70.60" fill="#a3dee9" stroke="#a3dee9" stroke-width="0.35"/><polygon points="753.20,70.60 756.70,69.43 756.00,72.93" fill="#a0d6e0" stroke="#a0d6e0" stroke-width="0.5"/><polygon points="756.70,69.43 759.50,71.77 756.00,72.93" fill="#a9d2da" stroke="#a9d2da" stroke-width="0.35"/><polygon points="756.00,72.93 759.50,71.77 758.80,75.27" fill="#a5c9d0" stroke="#a5c9d0" stroke-width="0.5"/><polygon points="759.50,71.77 762.30,74.10 758.80,75.27" fill="#aec4c8" stroke="#aec4c8" stroke-width="0.35"/><polygon points="758.80,75.27 762.30,74.10 761.60,77.60" fill="#aab9bc" stroke="#aab9bc" stroke-width="0.5"/><polygon points="753.90,67.10 757.40,65.93 756.70,69.43" fill="#b0e3ec" stroke="#b0e3ec" stroke-width="0.5"/><polygon points="757.40,65.93 760.20,68.27 756.70,69.43" fill="#b9e0e7" stroke="#b9e0e7" stroke-width="0.35"/><polygon points="756.70,69.43 760.20,68.27 759.50,71.77" fill="#b6d8de" stroke="#b6d8de" stroke-width="0.5"/><polygon points="760.20,68.27 763.00,70.60 759.50,71.77" fill="#c0d4d8" stroke="#c0d4d8" stroke-width="0.35"/><polygon points="759.50,71.77 763.00,70.60 762.30,74.10" fill="#bccacc" stroke="#bccacc" stroke-width="0.5"/><polygon points="757.40,65.93 760.90,64.77 760.20,68.27" fill="#c6e5eb" stroke="#c6e5eb" stroke-width="0.5"/><polygon points="760.90,64.77 763.70,67.10 760.20,68.27" fill="#d0e2e5" stroke="#d0e2e5" stroke-width="0.35"/><polygon points="760.20,68.27 763.70,67.10 763.00,70.60" fill="#cdd9db" stroke="#cdd9db" stroke-width="0.5"/><polygon points="760.90,64.77 764.40,63.60 763.70,67.10" fill="#dee8e9" stroke="#dee8e9" stroke-width="0.5"/><circle cx="722.6" cy="77.6" r="2.2" fill="none" stroke="#e8f8ff" stroke-width="0.8"/><circle cx="696.5" cy="122.5" r="2.6" fill="#35c4ec"/><defs><linearGradient id="osl" x1="0" x2="1"><stop offset="0" stop-color="#fff"/><stop offset="1" stop-color="#fff" stop-opacity="0.25"/></linearGradient></defs><path d="M702 122.5 q0.75 -1.2 1.5 0 q0.75 1.2 1.5 0 q0.75 -1.2 1.5 0 q0.75 1.2 1.5 0 q0.75 -1.2 1.5 0 q0.75 1.2 1.5 0 q0.75 -1.2 1.5 0 q0.75 1.2 1.5 0 q0.75 -1.2 1.5 0 q0.75 1.2 1.5 0 q0.75 -1.2 1.5 0 q0.75 1.2 1.5 0 q0.75 -1.2 1.5 0 q0.75 1.2 1.5 0 q0.75 -1.2 1.5 0 q0.75 1.2 1.5 0 q0.75 -1.2 1.5 0 q0.75 1.2 1.5 0 q0.75 -1.2 1.5 0 q0.75 1.2 1.5 0 q0.75 -1.2 1.5 0 q0.75 1.2 1.5 0 q0.75 -1.2 1.5 0 q0.75 1.2 1.5 0 q0.75 -1.2 1.5 0 q0.75 1.2 1.5 0 q0.75 -1.2 1.5 0 q0.75 1.2 1.5 0 q0.75 -1.2 1.5 0 q0.75 1.2 1.5 0 q0.75 -1.2 1.5 0 q0.75 1.2 1.5 0 q0.75 -1.2 1.5 0 q0.75 1.2 1.5 0 q0.75 -1.2 1.5 0 q0.75 1.2 1.5 0 q0.75 -1.2 1.5 0 q0.75 1.2 1.5 0 q0.75 -1.2 1.5 0" fill="none" stroke="url(#osl)" stroke-width="1.1"/><circle cx="766.3" cy="122.3" r="1.9" fill="none" stroke="#eee" stroke-width="0.9"/><rect x="773" y="118" width="17.5" height="9" fill="#2e2d30"/><rect x="791" y="118" width="6.5" height="9" fill="#2e2d30"/><path d="M792.8 121.5 h3 l-1.5 2 z" fill="#ddd"/></svg>
<div class="t" style="left:693px;top:95.65px;font-size:5.2px;height:5.2px;color:#d0d0d0;transform:scaleX(0.808);transform-origin:0 0;">T : 180</div>
<div class="t" style="left:693px;top:100.95px;font-size:5.2px;height:5.2px;color:#d0d0d0;transform:scaleX(0.789);transform-origin:0 0;">S : 100</div>
<div class="t" style="left:693px;top:106.25px;font-size:5.2px;height:5.2px;color:#d0d0d0;transform:scaleX(0.858);transform-origin:0 0;">L : 50</div>
<div class="t" style="left:693px;top:113.15px;font-size:5.2px;height:5.2px;color:#bdbdbd;transform:scaleX(0.837);transform-origin:0 0;">Opacité</div>
<div class="t" style="left:775px;top:120.15px;font-size:5.2px;height:5.2px;color:#d8d8d8;transform:scaleX(0.882);transform-origin:0 0;">100 %</div>
<div class="a" style="left:689px;top:130.5px;width:111px;height:8px;background:#272628;"></div>
<div class="a" style="left:698px;top:130.5px;width:18.5px;height:8px;background:#343336;"></div>
<div class="t" style="left:699px;top:132.15px;font-size:5.0px;height:5.0px;color:#ececec;transform:scaleX(0.872);transform-origin:0 0;">Calques</div>
<div class="t" style="left:719px;top:132.15px;font-size:5.0px;height:5.0px;color:#8a8a8a;transform:scaleX(0.867);transform-origin:0 0;">Effets</div>
<div class="t" style="left:734px;top:132.15px;font-size:5.0px;height:5.0px;color:#8a8a8a;transform:scaleX(0.955);transform-origin:0 0;">Styles</div>
<div class="t" style="left:751px;top:132.15px;font-size:5.0px;height:5.0px;color:#8a8a8a;transform:scaleX(0.869);transform-origin:0 0;">Text Styles</div>
<div class="t" style="left:692px;top:142.65px;font-size:5.0px;height:5.0px;color:#bdbdbd;transform:scaleX(0.850);transform-origin:0 0;">Opacité :</div>
<div class="a" style="left:714px;top:140.5px;width:22px;height:9px;background:#2c2b2e;"></div>
<div class="a" style="left:737px;top:140.5px;width:42px;height:9px;background:#2c2b2e;"></div>
<div class="t" style="left:716px;top:142.65px;font-size:5.0px;height:5.0px;color:#d8d8d8;transform:scaleX(0.846);transform-origin:0 0;">100 %</div>
<div class="t" style="left:739px;top:142.65px;font-size:5.0px;height:5.0px;color:#d8d8d8;transform:scaleX(0.869);transform-origin:0 0;">Normal</div>
<svg style="left:689px;top:130px" width="111" height="260" viewBox="689 130 111 260"><defs><linearGradient id="thg" x1="0" x2="1"><stop offset="0" stop-color="#2a5a98"/><stop offset="0.55" stop-color="#4aa4d8"/><stop offset="1" stop-color="#b8ecfa"/></linearGradient></defs><path d="M731.5 144 h3 l-1.5 2 z" fill="#ddd"/><path d="M776 143.2 l1 -1.2 l1 1.2 M776 146.3 l1 1.2 l1 -1.2" fill="none" stroke="#ccc" stroke-width="0.6"/><circle cx="786" cy="145" r="2.5" fill="#bbb"/><circle cx="786" cy="145" r="1" fill="#38363a"/><rect x="792.3" y="144.5" width="4" height="3.3" fill="#bbb"/><path d="M793 144.5 v-1.3 a1.3 1.3 0 0 1 2.6 0 v1.3" fill="none" stroke="#bbb" stroke-width="0.7"/><rect x="689" y="151" width="111" height="229" fill="#2a292c"/><rect x="690" y="151.50" width="104" height="12.6" fill="#333235"/><rect x="690" y="151.50" width="1.2" height="12.6" fill="#8c4434"/><path d="M693.5 156.30 L696.3 158.00 L693.5 159.70 Z" fill="#cfcfcf"/><rect x="699" y="152.50" width="12" height="11" fill="#1d1e25"/><g transform="translate(705 158.00) rotate(-40)"><path transform="translate(-4.8 1) scale(10 15)" d="M-0.032,-0.116 C0.258,-0.339 0.75,-0.247 1,0 C0.88,-0.1 0.5,-0.07 0.06,0.09 C-0.04,0.09 -0.07,-0.02 -0.032,-0.116 Z" fill="url(#thg)"/></g><path d="M786.8 158.00 L788.3 159.60 L791 156.00" fill="none" stroke="#f0f0f0" stroke-width="1"/><rect x="690" y="165.25" width="104" height="12.6" fill="#333235"/><rect x="690" y="165.25" width="1.2" height="12.6" fill="#8c4434"/><path d="M693.5 170.05 L696.3 171.75 L693.5 173.45 Z" fill="#cfcfcf"/><rect x="699" y="166.25" width="12" height="11" fill="#1d1e25"/><g transform="translate(705 171.75) rotate(-48)"><path transform="translate(-4.8 1) scale(10 15)" d="M-0.032,-0.116 C0.258,-0.339 0.75,-0.247 1,0 C0.88,-0.1 0.5,-0.07 0.06,0.09 C-0.04,0.09 -0.07,-0.02 -0.032,-0.116 Z" fill="url(#thg)"/></g><path d="M786.8 171.75 L788.3 173.35 L791 169.75" fill="none" stroke="#f0f0f0" stroke-width="1"/><rect x="690" y="179.00" width="104" height="12.6" fill="#333235"/><rect x="690" y="179.00" width="1.2" height="12.6" fill="#8c4434"/><path d="M693.5 183.80 L696.3 185.50 L693.5 187.20 Z" fill="#cfcfcf"/><rect x="699" y="180.00" width="12" height="11" fill="#1d1e25"/><g transform="translate(705 185.50) rotate(-56)"><path transform="translate(-4.8 1) scale(10 15)" d="M-0.032,-0.116 C0.258,-0.339 0.75,-0.247 1,0 C0.88,-0.1 0.5,-0.07 0.06,0.09 C-0.04,0.09 -0.07,-0.02 -0.032,-0.116 Z" fill="url(#thg)"/></g><path d="M786.8 185.50 L788.3 187.10 L791 183.50" fill="none" stroke="#f0f0f0" stroke-width="1"/><rect x="690" y="192.75" width="104" height="12.6" fill="#333235"/><rect x="690" y="192.75" width="1.2" height="12.6" fill="#8c4434"/><path d="M693.5 197.55 L696.3 199.25 L693.5 200.95 Z" fill="#cfcfcf"/><rect x="699" y="193.75" width="12" height="11" fill="#1d1e25"/><g transform="translate(705 199.25) rotate(-64)"><path transform="translate(-4.8 1) scale(10 15)" d="M-0.032,-0.116 C0.258,-0.339 0.75,-0.247 1,0 C0.88,-0.1 0.5,-0.07 0.06,0.09 C-0.04,0.09 -0.07,-0.02 -0.032,-0.116 Z" fill="url(#thg)"/></g><path d="M786.8 199.25 L788.3 200.85 L791 197.25" fill="none" stroke="#f0f0f0" stroke-width="1"/><rect x="690" y="206.50" width="104" height="12.6" fill="#333235"/><rect x="690" y="206.50" width="1.2" height="12.6" fill="#8c4434"/><path d="M693.5 211.30 L696.3 213.00 L693.5 214.70 Z" fill="#cfcfcf"/><rect x="699" y="207.50" width="12" height="11" fill="#1d1e25"/><g transform="translate(705 213.00) rotate(-72)"><path transform="translate(-4.8 1) scale(10 15)" d="M-0.032,-0.116 C0.258,-0.339 0.75,-0.247 1,0 C0.88,-0.1 0.5,-0.07 0.06,0.09 C-0.04,0.09 -0.07,-0.02 -0.032,-0.116 Z" fill="url(#thg)"/></g><path d="M786.8 213.00 L788.3 214.60 L791 211.00" fill="none" stroke="#f0f0f0" stroke-width="1"/><rect x="690" y="220.25" width="104" height="12.6" fill="#333235"/><rect x="690" y="220.25" width="1.2" height="12.6" fill="#8c4434"/><path d="M693.5 225.05 L696.3 226.75 L693.5 228.45 Z" fill="#cfcfcf"/><rect x="699" y="221.25" width="12" height="11" fill="#1d1e25"/><g transform="translate(705 226.75) rotate(-80)"><path transform="translate(-4.8 1) scale(10 15)" d="M-0.032,-0.116 C0.258,-0.339 0.75,-0.247 1,0 C0.88,-0.1 0.5,-0.07 0.06,0.09 C-0.04,0.09 -0.07,-0.02 -0.032,-0.116 Z" fill="url(#thg)"/></g><path d="M786.8 226.75 L788.3 228.35 L791 224.75" fill="none" stroke="#f0f0f0" stroke-width="1"/><rect x="690" y="234.00" width="104" height="12.6" fill="#333235"/><rect x="690" y="234.00" width="1.2" height="12.6" fill="#8c4434"/><path d="M693.5 238.80 L696.3 240.50 L693.5 242.20 Z" fill="#cfcfcf"/><rect x="699" y="235.00" width="12" height="11" fill="#1d1e25"/><g transform="translate(705 240.50) rotate(-88)"><path transform="translate(-4.8 1) scale(10 15)" d="M-0.032,-0.116 C0.258,-0.339 0.75,-0.247 1,0 C0.88,-0.1 0.5,-0.07 0.06,0.09 C-0.04,0.09 -0.07,-0.02 -0.032,-0.116 Z" fill="url(#thg)"/></g><path d="M786.8 240.50 L788.3 242.10 L791 238.50" fill="none" stroke="#f0f0f0" stroke-width="1"/><rect x="690" y="247.75" width="104" height="12.6" fill="#333235"/><rect x="690" y="247.75" width="1.2" height="12.6" fill="#8c4434"/><path d="M693.5 252.55 L696.3 254.25 L693.5 255.95 Z" fill="#cfcfcf"/><rect x="699" y="248.75" width="12" height="11" fill="#1d1e25"/><g transform="translate(705 254.25) rotate(70)"><path transform="translate(-4.8 1) scale(10 15)" d="M-0.032,-0.116 C0.258,-0.339 0.75,-0.247 1,0 C0.88,-0.1 0.5,-0.07 0.06,0.09 C-0.04,0.09 -0.07,-0.02 -0.032,-0.116 Z" fill="url(#thg)"/></g><path d="M786.8 254.25 L788.3 255.85 L791 252.25" fill="none" stroke="#f0f0f0" stroke-width="1"/><rect x="690" y="261.50" width="104" height="12.6" fill="#333235"/><rect x="690" y="261.50" width="1.2" height="12.6" fill="#8c4434"/><path d="M693.5 266.30 L696.3 268.00 L693.5 269.70 Z" fill="#cfcfcf"/><rect x="699" y="262.50" width="12" height="11" fill="#1d1e25"/><g transform="translate(705 268.00) rotate(60)"><path transform="translate(-4.8 1) scale(10 15)" d="M-0.032,-0.116 C0.258,-0.339 0.75,-0.247 1,0 C0.88,-0.1 0.5,-0.07 0.06,0.09 C-0.04,0.09 -0.07,-0.02 -0.032,-0.116 Z" fill="url(#thg)"/></g><path d="M786.8 268.00 L788.3 269.60 L791 266.00" fill="none" stroke="#f0f0f0" stroke-width="1"/><rect x="690" y="275.25" width="104" height="12.6" fill="#333235"/><rect x="690" y="275.25" width="1.2" height="12.6" fill="#8c4434"/><path d="M693.5 280.05 L696.3 281.75 L693.5 283.45 Z" fill="#cfcfcf"/><rect x="699" y="276.25" width="12" height="11" fill="#1d1e25"/><g transform="translate(705 281.75) rotate(48)"><path transform="translate(-4.8 1) scale(10 15)" d="M-0.032,-0.116 C0.258,-0.339 0.75,-0.247 1,0 C0.88,-0.1 0.5,-0.07 0.06,0.09 C-0.04,0.09 -0.07,-0.02 -0.032,-0.116 Z" fill="url(#thg)"/></g><path d="M786.8 281.75 L788.3 283.35 L791 279.75" fill="none" stroke="#f0f0f0" stroke-width="1"/><rect x="690" y="289.00" width="104" height="12.6" fill="#333235"/><rect x="690" y="289.00" width="1.2" height="12.6" fill="#8c4434"/><path d="M693.5 293.80 L696.3 295.50 L693.5 297.20 Z" fill="#cfcfcf"/><rect x="699" y="290.00" width="12" height="11" fill="#1d1e25"/><g transform="translate(705 295.50) rotate(36)"><path transform="translate(-4.8 1) scale(10 15)" d="M-0.032,-0.116 C0.258,-0.339 0.75,-0.247 1,0 C0.88,-0.1 0.5,-0.07 0.06,0.09 C-0.04,0.09 -0.07,-0.02 -0.032,-0.116 Z" fill="url(#thg)"/></g><path d="M786.8 295.50 L788.3 297.10 L791 293.50" fill="none" stroke="#f0f0f0" stroke-width="1"/><rect x="690" y="302.75" width="104" height="12.6" fill="#333235"/><rect x="690" y="302.75" width="1.2" height="12.6" fill="#8c4434"/><path d="M693.5 307.55 L696.3 309.25 L693.5 310.95 Z" fill="#cfcfcf"/><rect x="699" y="303.75" width="12" height="11" fill="#1d1e25"/><g transform="translate(705 309.25) rotate(24)"><path transform="translate(-4.8 1) scale(10 15)" d="M-0.032,-0.116 C0.258,-0.339 0.75,-0.247 1,0 C0.88,-0.1 0.5,-0.07 0.06,0.09 C-0.04,0.09 -0.07,-0.02 -0.032,-0.116 Z" fill="url(#thg)"/></g><path d="M786.8 309.25 L788.3 310.85 L791 307.25" fill="none" stroke="#f0f0f0" stroke-width="1"/><rect x="690" y="316.50" width="104" height="12.6" fill="#333235"/><rect x="690" y="316.50" width="1.2" height="12.6" fill="#8c4434"/><path d="M693.5 321.30 L696.3 323.00 L693.5 324.70 Z" fill="#cfcfcf"/><rect x="699" y="317.50" width="12" height="11" fill="#1d1e25"/><g transform="translate(705 323.00) rotate(12)"><path transform="translate(-4.8 1) scale(10 15)" d="M-0.032,-0.116 C0.258,-0.339 0.75,-0.247 1,0 C0.88,-0.1 0.5,-0.07 0.06,0.09 C-0.04,0.09 -0.07,-0.02 -0.032,-0.116 Z" fill="url(#thg)"/></g><path d="M786.8 323.00 L788.3 324.60 L791 321.00" fill="none" stroke="#f0f0f0" stroke-width="1"/><rect x="690" y="330.25" width="104" height="12.6" fill="#333235"/><rect x="690" y="330.25" width="1.2" height="12.6" fill="#8c4434"/><path d="M693.5 335.05 L696.3 336.75 L693.5 338.45 Z" fill="#cfcfcf"/><rect x="699" y="331.25" width="12" height="11" fill="#1d1e25"/><g transform="translate(705 336.75) rotate(0)"><path transform="translate(-4.8 1) scale(10 15)" d="M-0.032,-0.116 C0.258,-0.339 0.75,-0.247 1,0 C0.88,-0.1 0.5,-0.07 0.06,0.09 C-0.04,0.09 -0.07,-0.02 -0.032,-0.116 Z" fill="url(#thg)"/></g><path d="M786.8 336.75 L788.3 338.35 L791 334.75" fill="none" stroke="#f0f0f0" stroke-width="1"/><rect x="690" y="344.00" width="104" height="12.6" fill="#3a3f4d"/><rect x="690" y="344.00" width="1.2" height="12.6" fill="#8c4434"/><circle cx="694.5" cy="350.50" r="2" fill="none" stroke="#ccc" stroke-width="0.6"/><circle cx="694.5" cy="350.50" r="0.7" fill="#ccc"/><rect x="699" y="345.00" width="12" height="11" fill="#1d1e25"/><g transform="translate(705 350.50) rotate(-12)"><path transform="translate(-4.8 1) scale(10 15)" d="M-0.032,-0.116 C0.258,-0.339 0.75,-0.247 1,0 C0.88,-0.1 0.5,-0.07 0.06,0.09 C-0.04,0.09 -0.07,-0.02 -0.032,-0.116 Z" fill="url(#thg)"/></g><path d="M786.8 350.50 L788.3 352.10 L791 348.50" fill="none" stroke="#f0f0f0" stroke-width="1"/></svg>
<div class="t" style="left:712.3px;top:156.75px;font-size:4.8px;height:4.8px;color:#9c9c9c;transform:scaleX(0.922);transform-origin:0 0;">(Symbol)</div>
<div class="t" style="left:712.3px;top:170.50px;font-size:4.8px;height:4.8px;color:#9c9c9c;transform:scaleX(0.922);transform-origin:0 0;">(Symbol)</div>
<div class="t" style="left:712.3px;top:184.25px;font-size:4.8px;height:4.8px;color:#9c9c9c;transform:scaleX(0.922);transform-origin:0 0;">(Symbol)</div>
<div class="t" style="left:712.3px;top:198.00px;font-size:4.8px;height:4.8px;color:#9c9c9c;transform:scaleX(0.922);transform-origin:0 0;">(Symbol)</div>
<div class="t" style="left:712.3px;top:211.75px;font-size:4.8px;height:4.8px;color:#9c9c9c;transform:scaleX(0.922);transform-origin:0 0;">(Symbol)</div>
<div class="t" style="left:712.3px;top:225.50px;font-size:4.8px;height:4.8px;color:#9c9c9c;transform:scaleX(0.922);transform-origin:0 0;">(Symbol)</div>
<div class="t" style="left:712.3px;top:239.25px;font-size:4.8px;height:4.8px;color:#9c9c9c;transform:scaleX(0.922);transform-origin:0 0;">(Symbol)</div>
<div class="t" style="left:712.3px;top:253.00px;font-size:4.8px;height:4.8px;color:#9c9c9c;transform:scaleX(0.922);transform-origin:0 0;">(Symbol)</div>
<div class="t" style="left:712.3px;top:266.75px;font-size:4.8px;height:4.8px;color:#9c9c9c;transform:scaleX(0.922);transform-origin:0 0;">(Symbol)</div>
<div class="t" style="left:712.3px;top:280.50px;font-size:4.8px;height:4.8px;color:#9c9c9c;transform:scaleX(0.922);transform-origin:0 0;">(Symbol)</div>
<div class="t" style="left:712.3px;top:294.25px;font-size:4.8px;height:4.8px;color:#9c9c9c;transform:scaleX(0.922);transform-origin:0 0;">(Symbol)</div>
<div class="t" style="left:712.3px;top:308.00px;font-size:4.8px;height:4.8px;color:#9c9c9c;transform:scaleX(0.922);transform-origin:0 0;">(Symbol)</div>
<div class="t" style="left:712.3px;top:321.75px;font-size:4.8px;height:4.8px;color:#9c9c9c;transform:scaleX(0.922);transform-origin:0 0;">(Symbol)</div>
<div class="t" style="left:712.3px;top:335.50px;font-size:4.8px;height:4.8px;color:#9c9c9c;transform:scaleX(0.922);transform-origin:0 0;">(Symbol)</div>
<div class="t" style="left:712.3px;top:349.25px;font-size:4.8px;height:4.8px;color:#9c9c9c;transform:scaleX(0.922);transform-origin:0 0;">(Symbol)</div>
<div class="a" style="left:689px;top:380px;width:111px;height:10px;background:#2a292b;"></div>
<svg style="left:689px;top:380px" width="111" height="10" viewBox="689 380 111 10"><ellipse cx="696" cy="385" rx="3" ry="2" fill="none" stroke="#ddd" stroke-width="0.9"/><path d="M693 386 v1 a3 2 0 0 0 6 0 v-1" fill="none" stroke="#ddd" stroke-width="0.8"/><rect x="725" y="382.5" width="5" height="5" fill="none" stroke="#e8e8e8" stroke-width="1"/><circle cx="736.5" cy="385" r="2.6" fill="#ddd"/><path d="M736.5 382.4 a2.6 2.6 0 0 0 0 5.2 z" fill="#555"/><path d="M741.5 387.5 L745.5 382.5 M742 384.5 h3" stroke="#ddd" stroke-width="0.9"/><path d="M773 382 h3 l1.3 1.3 v4.7 h-4.3 z" fill="#cfcfcf"/><path d="M782 382 h3 l1.3 1.3 v4.7 h-4.3 z" fill="#cfcfcf"/><rect x="792" y="383" width="4" height="5" fill="#cfcfcf"/><rect x="791.5" y="382" width="5" height="0.8" fill="#cfcfcf"/></svg>
<div class="a" style="left:689px;top:390px;width:111px;height:8px;background:#272628;"></div>
<div class="a" style="left:699px;top:390px;width:25px;height:8px;background:#343336;"></div>
<div class="t" style="left:700px;top:391.65px;font-size:5.0px;height:5.0px;color:#ececec;transform:scaleX(0.851);transform-origin:0 0;">Transformer</div>
<div class="t" style="left:727px;top:391.65px;font-size:5.0px;height:5.0px;color:#8a8a8a;transform:scaleX(0.933);transform-origin:0 0;">Historique</div>
<div class="t" style="left:751px;top:391.65px;font-size:5.0px;height:5.0px;color:#8a8a8a;transform:scaleX(0.910);transform-origin:0 0;">Navigateur</div>
<svg style="left:689px;top:398px" width="111" height="43" viewBox="689 398 111 43"><path d="M705.5 404.5 L715.5 415.5 L705.5 426.5 L695.5 415.5 Z" fill="#5a585b"/><circle cx="701" cy="408.5" r="1.1" fill="#e8e8e8"/><circle cx="710.5" cy="410.5" r="1.1" fill="#e8e8e8"/><circle cx="695.5" cy="415" r="1.1" fill="#e8e8e8"/><circle cx="705" cy="415" r="1.1" fill="#e8e8e8"/><circle cx="714.5" cy="417" r="1.1" fill="#e8e8e8"/><circle cx="699.5" cy="420" r="1.1" fill="#e8e8e8"/><circle cx="709" cy="421.5" r="1.1" fill="#e8e8e8"/><circle cx="704" cy="425.5" r="1.1" fill="#e8e8e8"/><path d="M706.2 403.3 L708.5 405.6 L706.2 407.9 L703.9 405.6 Z" fill="#fff"/><rect x="727" y="404" width="26" height="8" fill="#2c2b2e"/><rect x="761" y="404" width="26" height="8" fill="#2c2b2e"/><rect x="727" y="413" width="26" height="8" fill="#2c2b2e"/><rect x="761" y="413" width="26" height="8" fill="#2c2b2e"/><rect x="727" y="425.5" width="25" height="8.5" fill="#2c2b2e"/><rect x="761" y="425.5" width="25" height="8.5" fill="#2c2b2e"/><path d="M747.5 429 h2.6 l-1.3 1.8 z M781.5 429 h2.6 l-1.3 1.8 z" fill="#ddd"/><path d="M791.5 408.5 v7 M793 408.5 v7" stroke="#999" stroke-width="0.6"/><circle cx="792.2" cy="412" r="1.2" fill="none" stroke="#bbb" stroke-width="0.6"/></svg>
<div class="t" style="left:719.8px;top:406.75px;font-size:4.8px;height:4.8px;color:#cfcfcf;transform:scaleX(0.801);transform-origin:0 0;">X :</div>
<div class="t" style="left:727.5px;top:406.75px;font-size:4.8px;height:4.8px;color:#d8d8d8;transform:scaleX(0.914);transform-origin:0 0;">135,6 mm</div>
<div class="t" style="left:719.8px;top:415.75px;font-size:4.8px;height:4.8px;color:#cfcfcf;transform:scaleX(0.813);transform-origin:0 0;">Y :</div>
<div class="t" style="left:727.5px;top:415.75px;font-size:4.8px;height:4.8px;color:#d8d8d8;transform:scaleX(0.937);transform-origin:0 0;">94,4 mm</div>
<div class="t" style="left:719.8px;top:428.75px;font-size:4.8px;height:4.8px;color:#cfcfcf;transform:scaleX(0.766);transform-origin:0 0;">R :</div>
<div class="t" style="left:728px;top:428.75px;font-size:4.8px;height:4.8px;color:#d8d8d8;transform:scaleX(0.986);transform-origin:0 0;">-94,7 °</div>
<div class="t" style="left:755px;top:406.75px;font-size:4.8px;height:4.8px;color:#cfcfcf;transform:scaleX(0.872);transform-origin:0 0;">L :</div>
<div class="t" style="left:762px;top:406.75px;font-size:4.8px;height:4.8px;color:#d8d8d8;transform:scaleX(0.937);transform-origin:0 0;">16,8 mm</div>
<div class="t" style="left:755px;top:415.75px;font-size:4.8px;height:4.8px;color:#cfcfcf;transform:scaleX(0.766);transform-origin:0 0;">H :</div>
<div class="t" style="left:761.5px;top:415.75px;font-size:4.8px;height:4.8px;color:#d8d8d8;transform:scaleX(0.991);transform-origin:0 0;">38,4 mm</div>
<div class="t" style="left:755px;top:428.75px;font-size:4.8px;height:4.8px;color:#cfcfcf;transform:scaleX(0.767);transform-origin:0 0;">S :</div>
<div class="t" style="left:762px;top:428.75px;font-size:4.8px;height:4.8px;color:#d8d8d8;transform:scaleX(0.844);transform-origin:0 0;">0 °</div>
<svg style="left:127px;top:41px" width="562" height="400" viewBox="127 41 562 400"><defs><linearGradient id="fg" x1="0" y1="0.5" x2="1" y2="0.5"><stop offset="0" stop-color="#03124a"/><stop offset="0.1" stop-color="#08307e"/><stop offset="0.25" stop-color="#1260b0"/><stop offset="0.42" stop-color="#1a94d4"/><stop offset="0.62" stop-color="#28c0ee"/><stop offset="1" stop-color="#3cdcfc"/></linearGradient></defs><path transform="rotate(0 500.50 168.00) translate(0 0) translate(350.070 242.430) rotate(0.000) scale(1.00000) translate(-350.070 -242.430) translate(394.0 204.0) rotate(-18.677) scale(112.420)" d="M-0.032,-0.116 C0.258,-0.339 0.75,-0.247 1,0 C0.88,-0.1 0.5,-0.07 0.06,0.09 C-0.04,0.09 -0.07,-0.02 -0.032,-0.116 Z" fill="url(#fg)" stroke="#06122e" stroke-width="1.15" vector-effect="non-scaling-stroke"/><path transform="rotate(0 494.39 201.57) translate(0 -3) translate(350.070 242.430) rotate(11.625) scale(0.88900) translate(-350.070 -242.430) translate(394.0 204.0) rotate(-18.677) scale(112.420)" d="M-0.032,-0.116 C0.258,-0.339 0.75,-0.247 1,0 C0.88,-0.1 0.5,-0.07 0.06,0.09 C-0.04,0.09 -0.07,-0.02 -0.032,-0.116 Z" fill="url(#fg)" stroke="#06122e" stroke-width="1.15" vector-effect="non-scaling-stroke"/><path transform="rotate(0 482.52 230.81) translate(0 -4.5) translate(350.070 242.430) rotate(23.250) scale(0.79032) translate(-350.070 -242.430) translate(394.0 204.0) rotate(-18.677) scale(112.420)" d="M-0.032,-0.116 C0.258,-0.339 0.75,-0.247 1,0 C0.88,-0.1 0.5,-0.07 0.06,0.09 C-0.04,0.09 -0.07,-0.02 -0.032,-0.116 Z" fill="url(#fg)" stroke="#06122e" stroke-width="1.15" vector-effect="non-scaling-stroke"/><path transform="rotate(0 466.68 255.46) translate(0 -4.5) translate(350.070 242.430) rotate(34.875) scale(0.70260) translate(-350.070 -242.430) translate(394.0 204.0) rotate(-18.677) scale(112.420)" d="M-0.032,-0.116 C0.258,-0.339 0.75,-0.247 1,0 C0.88,-0.1 0.5,-0.07 0.06,0.09 C-0.04,0.09 -0.07,-0.02 -0.032,-0.116 Z" fill="url(#fg)" stroke="#06122e" stroke-width="1.15" vector-effect="non-scaling-stroke"/><path transform="rotate(0 448.47 274.58) translate(0 -4) translate(350.070 242.430) rotate(46.500) scale(0.62461) translate(-350.070 -242.430) translate(394.0 204.0) rotate(-18.677) scale(112.420)" d="M-0.032,-0.116 C0.258,-0.339 0.75,-0.247 1,0 C0.88,-0.1 0.5,-0.07 0.06,0.09 C-0.04,0.09 -0.07,-0.02 -0.032,-0.116 Z" fill="url(#fg)" stroke="#06122e" stroke-width="1.15" vector-effect="non-scaling-stroke"/><path transform="rotate(0 429.78 288.54) translate(0.5 -3) translate(350.070 242.430) rotate(58.125) scale(0.55528) translate(-350.070 -242.430) translate(394.0 204.0) rotate(-18.677) scale(112.420)" d="M-0.032,-0.116 C0.258,-0.339 0.75,-0.247 1,0 C0.88,-0.1 0.5,-0.07 0.06,0.09 C-0.04,0.09 -0.07,-0.02 -0.032,-0.116 Z" fill="url(#fg)" stroke="#06122e" stroke-width="1.15" vector-effect="non-scaling-stroke"/><path transform="rotate(0 410.24 297.38) translate(0 -2) translate(350.070 242.430) rotate(69.750) scale(0.49364) translate(-350.070 -242.430) translate(394.0 204.0) rotate(-18.677) scale(112.420)" d="M-0.032,-0.116 C0.258,-0.339 0.75,-0.247 1,0 C0.88,-0.1 0.5,-0.07 0.06,0.09 C-0.04,0.09 -0.07,-0.02 -0.032,-0.116 Z" fill="url(#fg)" stroke="#06122e" stroke-width="1.15" vector-effect="non-scaling-stroke"/><path transform="rotate(0 391.26 301.80) translate(-1 -1) translate(350.070 242.430) rotate(81.375) scale(0.43885) translate(-350.070 -242.430) translate(394.0 204.0) rotate(-18.677) scale(112.420)" d="M-0.032,-0.116 C0.258,-0.339 0.75,-0.247 1,0 C0.88,-0.1 0.5,-0.07 0.06,0.09 C-0.04,0.09 -0.07,-0.02 -0.032,-0.116 Z" fill="url(#fg)" stroke="#06122e" stroke-width="1.15" vector-effect="non-scaling-stroke"/><path transform="rotate(0 374.50 302.56) translate(-1.5 0) translate(350.070 242.430) rotate(93.000) scale(0.39013) translate(-350.070 -242.430) translate(394.0 204.0) rotate(-18.677) scale(112.420)" d="M-0.032,-0.116 C0.258,-0.339 0.75,-0.247 1,0 C0.88,-0.1 0.5,-0.07 0.06,0.09 C-0.04,0.09 -0.07,-0.02 -0.032,-0.116 Z" fill="url(#fg)" stroke="#06122e" stroke-width="1.15" vector-effect="non-scaling-stroke"/><path transform="rotate(0 360.87 300.63) translate(-1 1.2) translate(350.070 242.430) rotate(104.625) scale(0.34683) translate(-350.070 -242.430) translate(394.0 204.0) rotate(-18.677) scale(112.420)" d="M-0.032,-0.116 C0.258,-0.339 0.75,-0.247 1,0 C0.88,-0.1 0.5,-0.07 0.06,0.09 C-0.04,0.09 -0.07,-0.02 -0.032,-0.116 Z" fill="url(#fg)" stroke="#06122e" stroke-width="1.15" vector-effect="non-scaling-stroke"/><path transform="rotate(0 349.14 295.98) translate(-1 1.8) translate(350.070 242.430) rotate(116.250) scale(0.30833) translate(-350.070 -242.430) translate(394.0 204.0) rotate(-18.677) scale(112.420)" d="M-0.032,-0.116 C0.258,-0.339 0.75,-0.247 1,0 C0.88,-0.1 0.5,-0.07 0.06,0.09 C-0.04,0.09 -0.07,-0.02 -0.032,-0.116 Z" fill="url(#fg)" stroke="#06122e" stroke-width="1.15" vector-effect="non-scaling-stroke"/><path transform="rotate(0 340.36 289.50) translate(-0.5 2) translate(350.070 242.430) rotate(127.875) scale(0.27411) translate(-350.070 -242.430) translate(394.0 204.0) rotate(-18.677) scale(112.420)" d="M-0.032,-0.116 C0.258,-0.339 0.75,-0.247 1,0 C0.88,-0.1 0.5,-0.07 0.06,0.09 C-0.04,0.09 -0.07,-0.02 -0.032,-0.116 Z" fill="url(#fg)" stroke="#06122e" stroke-width="1.15" vector-effect="non-scaling-stroke"/><path transform="rotate(2 334.48 281.53) translate(0.5 1.5) translate(350.070 242.430) rotate(139.500) scale(0.24368) translate(-350.070 -242.430) translate(394.0 204.0) rotate(-18.677) scale(112.420)" d="M-0.032,-0.116 C0.258,-0.339 0.75,-0.247 1,0 C0.88,-0.1 0.5,-0.07 0.06,0.09 C-0.04,0.09 -0.07,-0.02 -0.032,-0.116 Z" fill="url(#fg)" stroke="#06122e" stroke-width="1.15" vector-effect="non-scaling-stroke"/><path transform="rotate(5 330.82 273.99) translate(1.5 1.7) translate(350.070 242.430) rotate(151.125) scale(0.21663) translate(-350.070 -242.430) translate(394.0 204.0) rotate(-18.677) scale(112.420)" d="M-0.032,-0.116 C0.258,-0.339 0.75,-0.247 1,0 C0.88,-0.1 0.5,-0.07 0.06,0.09 C-0.04,0.09 -0.07,-0.02 -0.032,-0.116 Z" fill="url(#fg)" stroke="#06122e" stroke-width="1.15" vector-effect="non-scaling-stroke"/><path transform="rotate(9 329.15 266.21) translate(2.5 1.5) translate(350.070 242.430) rotate(162.750) scale(0.19259) translate(-350.070 -242.430) translate(394.0 204.0) rotate(-18.677) scale(112.420)" d="M-0.032,-0.116 C0.258,-0.339 0.75,-0.247 1,0 C0.88,-0.1 0.5,-0.07 0.06,0.09 C-0.04,0.09 -0.07,-0.02 -0.032,-0.116 Z" fill="url(#fg)" stroke="#06122e" stroke-width="1.15" vector-effect="non-scaling-stroke"/><path d="M471 126.7 L500.3 167.8 L405 235.4 L375.8 194.7 Z" fill="none" stroke="#6f86c0" stroke-width="0.6"/><path d="M485.6 147.2 L495.3 140.5 M391 215 L416 214 L430 196" fill="none" stroke="#6f86c0" stroke-width="0.6"/><circle cx="471" cy="126.7" r="1.7" fill="#34478a" stroke="#7f90c8" stroke-width="0.5"/><circle cx="500.3" cy="167.8" r="1.7" fill="#34478a" stroke="#7f90c8" stroke-width="0.5"/><circle cx="375.8" cy="194.7" r="1.7" fill="#34478a" stroke="#7f90c8" stroke-width="0.5"/><circle cx="423.3" cy="160.8" r="1.7" fill="#34478a" stroke="#7f90c8" stroke-width="0.5"/><circle cx="485.6" cy="147.2" r="1.7" fill="#34478a" stroke="#7f90c8" stroke-width="0.5"/><circle cx="495.3" cy="140.5" r="2.1" fill="#fff" stroke="#8090a8" stroke-width="0.7"/><circle cx="452.5" cy="202" r="2.1" fill="#e4ecff" stroke="#5068b0" stroke-width="0.9"/><circle cx="452.5" cy="202" r="0.7" fill="#8aa0d8"/><circle cx="405" cy="235.4" r="2.1" fill="#e4ecff" stroke="#5068b0" stroke-width="0.9"/><circle cx="405" cy="235.4" r="0.7" fill="#8aa0d8"/><circle cx="391" cy="215" r="2.1" fill="#e4ecff" stroke="#5068b0" stroke-width="0.9"/><circle cx="391" cy="215" r="0.7" fill="#8aa0d8"/><path d="M428.5 173.5 L428.5 181 L430.3 179.3 L431.6 182 L432.6 181.5 L431.4 178.8 L433.8 178.6 Z" fill="#111" stroke="#fff" stroke-width="0.5"/></svg>
<div class="a" style="left:689px;top:33px;width:1px;height:408px;background:#161517;"></div>
<div class="a" style="left:571px;top:50px;width:109.5px;height:115.5px;background:#3a3a3a;box-shadow:0 0 2px rgba(0,0,0,0.4)"></div>
<div class="a" style="left:571px;top:50px;width:109.5px;height:9.5px;background:#2a2a2a;"></div>
<svg style="left:571px;top:50px" width="110" height="116" viewBox="571 50 110 116"><circle cx="575.5" cy="54.8" r="1.8" fill="#555"/><circle cx="581.5" cy="54.8" r="1.8" fill="#3e3e3e"/><rect x="592.5" y="87.5" width="66" height="66" fill="none" stroke="#9a9a9a" stroke-width="0.8"/><path d="M625.5 88 V153 M593 120.3 H658" stroke="#8a8a8a" stroke-width="0.7" stroke-dasharray="2 1.5"/><rect x="608.8" y="103.2" width="33.6" height="33.6" fill="#4c4c4c" stroke="#b5b5b5" stroke-width="1.2"/><path d="M610.5 120.3 H640.7 M625.5 104.8 V135.3" stroke="#f4f4f4" stroke-width="0.9"/><path d="M610.2 120.3 l2.5 -1.6 v3.2 z M641 120.3 l-2.5 -1.6 v3.2 z M625.5 104.5 l-1.6 2.5 h3.2 z M625.5 135.8 l-1.6 -2.5 h3.2 z" fill="#f4f4f4"/><path d="M635.5 146.5 h3 M637 145 v3" stroke="#8a8a8a" stroke-width="0.6"/><circle cx="642.5" cy="146.3" r="3" fill="none" stroke="#8a8a8a" stroke-width="0.6"/><path d="M639.5 146.3 h6 M642.5 143.3 v6" stroke="#8a8a8a" stroke-width="0.5"/><circle cx="651" cy="146.3" r="3" fill="none" stroke="#8a8a8a" stroke-width="0.6"/><path d="M648 146.3 h6 M651 143.3 v6" stroke="#8a8a8a" stroke-width="0.5"/></svg>
<div class="t" style="left:587px;top:52.65px;font-size:5.4px;height:5.4px;color:#e8e8e8;transform:scaleX(0.842);transform-origin:0 0;">Constraints</div>
<div class="t" style="left:587px;top:68.45px;font-size:5.2px;height:5.2px;color:#cfcfcf;transform:scaleX(0.879);transform-origin:0 0;">Determine how the object responds to</div>
<div class="t" style="left:594px;top:74.25px;font-size:5.2px;height:5.2px;color:#cfcfcf;transform:scaleX(0.879);transform-origin:0 0;">changes made to its container.</div>
<div class="t" style="left:9px;top:443.15px;font-size:5.0px;height:5.0px;color:#b8b8b8;transform:scaleX(0.907);transform-origin:0 0">"Courbe" sélectionné(s). <b style="color:#fff">Glisser</b> pour déplacer la sélection. <b style="color:#fff">Cliquez</b> sur un autre objet pour le sélectionner. <b style="color:#fff">Cliquez</b> sur une zone vide pour annuler la sélection.</div>
</body></html>
